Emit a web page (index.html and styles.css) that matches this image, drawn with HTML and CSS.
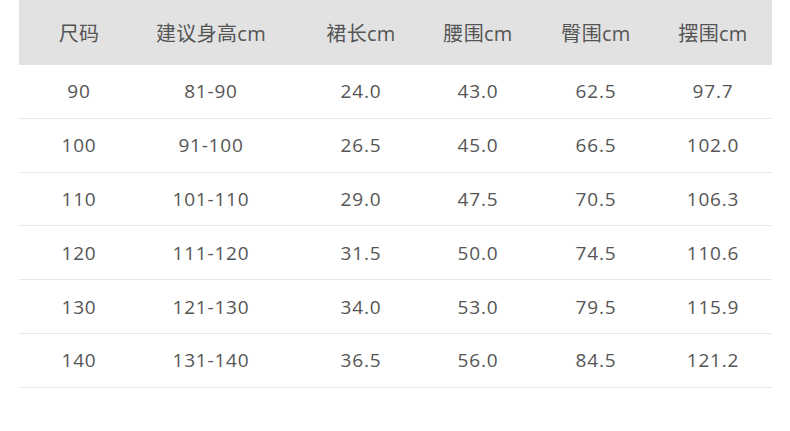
FILE: index.html
```html
<!DOCTYPE html>
<html lang="zh">
<head>
<meta charset="utf-8">
<link rel="stylesheet" href="styles.css">
</head>
<body>
<div class="table">
  <div class="row head">
    <div>尺码</div><div>建议身高cm</div><div>裙长cm</div><div>腰围cm</div><div>臀围cm</div><div>摆围cm</div>
  </div>
  <div class="row"><div>90</div><div>81-90</div><div>24.0</div><div>43.0</div><div>62.5</div><div>97.7</div></div>
  <div class="row"><div>100</div><div>91-100</div><div>26.5</div><div>45.0</div><div>66.5</div><div>102.0</div></div>
  <div class="row"><div>110</div><div>101-110</div><div>29.0</div><div>47.5</div><div>70.5</div><div>106.3</div></div>
  <div class="row"><div>120</div><div>111-120</div><div>31.5</div><div>50.0</div><div>74.5</div><div>110.6</div></div>
  <div class="row"><div>130</div><div>121-130</div><div>34.0</div><div>53.0</div><div>79.5</div><div>115.9</div></div>
  <div class="row"><div>140</div><div>131-140</div><div>36.5</div><div>56.0</div><div>84.5</div><div>121.2</div></div>
</div>
</body>
</html>
```
FILE: styles.css
```css
html, body {
  margin: 0;
  padding: 0;
  background: #ffffff;
}
body {
  font-family: "Open Sans", "Noto Sans CJK SC", sans-serif;
  color: #555555;
}
.table {
  margin-left: 19px;
  width: 753px;
}
.row {
  display: grid;
  grid-template-columns: 120px 144px 156px 78px 158px 76px 1fr;
  height: 52.8px;
  align-items: center;
  border-bottom: 1px solid #e6e6e6;
  font-size: 19px;
  letter-spacing: 0.8px;
}
.row > div {
  text-align: center;
  white-space: nowrap;
}
.head {
  height: 65px;
  background: #e2e2e2;
  border-bottom: none;
  font-size: 20px;
  letter-spacing: 0.3px;
}
```
